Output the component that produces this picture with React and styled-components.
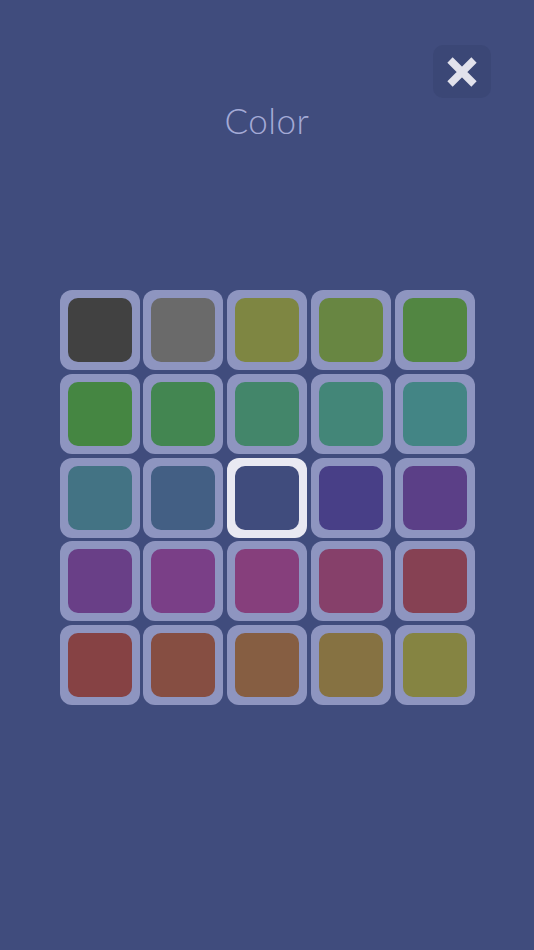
import React, { useState } from "react";
import styled, { createGlobalStyle } from "styled-components";

const Global = createGlobalStyle`
  html, body { margin: 0; padding: 0; background: #404c7d; }
  body { font-family: "Lato", "Open Sans", sans-serif; }
`;

const Screen = styled.div`
  width: 534px;
  height: 950px;
  background: #404c7d;
  display: flex;
  flex-direction: column;
  align-items: center;
  position: relative;
  box-sizing: border-box;
`;

const CloseButton = styled.button`
  position: absolute;
  top: 45px;
  left: 433px;
  width: 58px;
  height: 53px;
  border: none;
  border-radius: 10px;
  background: #3b4776;
  display: flex;
  align-items: center;
  justify-content: center;
  padding: 0;
  cursor: pointer;
`;

const Title = styled.h1`
  margin: 98px 0 0;
  font-family: "Lato", "Open Sans", sans-serif;
  font-weight: 300;
  font-size: 35px;
  letter-spacing: 0.5px;
  color: #a4aad6;
  line-height: 44px;
`;

const Grid = styled.div`
  margin-top: 148px;
  display: grid;
  grid-template-columns: repeat(5, 80px);
  grid-auto-rows: 80px;
  gap: 3.75px;
`;

const Cell = styled.div`
  box-sizing: border-box;
  border-radius: 12px;
  padding: 8px;
  background: ${(p) => (p.$selected ? "#e9e9f2" : "#8e95c0")};
  cursor: pointer;
`;

const Swatch = styled.div`
  width: 100%;
  height: 100%;
  border-radius: 10px;
  background: ${(p) => p.$color};
`;

const COLORS = [
  "#414141", "#6a6a6a", "#7e8642", "#688642", "#528642",
  "#458642", "#438651", "#43866a", "#438678", "#438585",
  "#437384", "#435f84", "#404c7d", "#483f87", "#5b3f87",
  "#693f87", "#7a3f87", "#863f7c", "#86406a", "#864153",
  "#864244", "#864e42", "#865e42", "#867242", "#858442",
];

export default function App() {
  const [selected, setSelected] = useState(12);
  return (
    <>
      <Global />
      <Screen>
        <CloseButton aria-label="Close">
          <svg width="32" height="32" viewBox="0 0 32 32">
            <path
              d="M4 4 L28 28 M28 4 L4 28"
              stroke="#e2e2ec"
              strokeWidth="7.5"
              strokeLinecap="butt"
            />
          </svg>
        </CloseButton>
        <Title>Color</Title>
        <Grid>
          {COLORS.map((c, i) => (
            <Cell key={i} $selected={i === selected} onClick={() => setSelected(i)}>
              <Swatch $color={c} />
            </Cell>
          ))}
        </Grid>
      </Screen>
    </>
  );
}
